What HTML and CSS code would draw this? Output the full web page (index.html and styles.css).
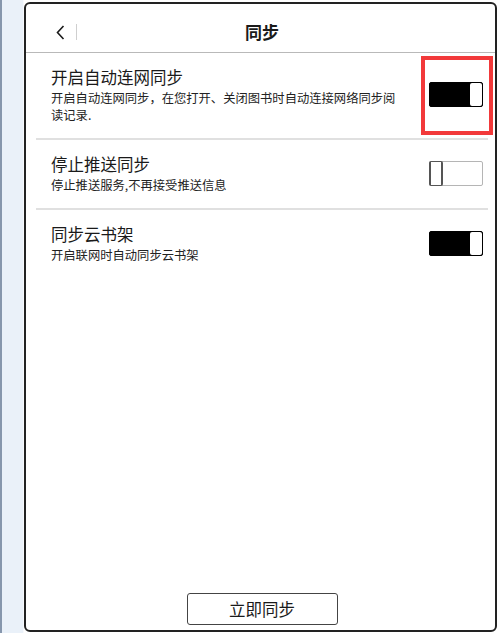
FILE: index.html
```html
<!DOCTYPE html>
<html lang="zh">
<head>
<meta charset="utf-8">
<title>同步</title>
<link rel="stylesheet" href="styles.css">
</head>
<body>
<div class="shell">
  <div class="rail"></div>
  <div class="frame">
    <header class="header">
      <div class="back">
        <svg class="chev" width="9" height="15" viewBox="0 0 9 15"><path d="M7.5 1 L1.5 7.5 L7.5 14" fill="none" stroke="#1a1a1a" stroke-width="1.6"/></svg>
        <span class="vsep"></span>
      </div>
      <h1 class="title">同步</h1>
      <div></div>
    </header>
    <div class="list">
      <div class="row">
        <div class="text">
          <div class="row-title">开启自动连网同步</div>
          <div class="row-sub">开启自动连网同步，在您打开、关闭图书时自动连接网络同步阅读记录.</div>
        </div>
        <div class="toggle on"><span class="knob"></span></div>
      </div>
      <div class="row">
        <div class="text">
          <div class="row-title">停止推送同步</div>
          <div class="row-sub">停止推送服务,不再接受推送信息</div>
        </div>
        <div class="toggle off"><span class="knob"></span></div>
      </div>
      <div class="row last">
        <div class="text">
          <div class="row-title">同步云书架</div>
          <div class="row-sub">开启联网时自动同步云书架</div>
        </div>
        <div class="toggle on"><span class="knob"></span></div>
      </div>
    </div>
    <div class="footer">
      <button class="sync-btn">立即同步</button>
    </div>
    <div class="highlight"></div>
  </div>
</div>
</body>
</html>
```
FILE: styles.css
```css
html, body {
  margin: 0;
  padding: 0;
  background: #ffffff;
  font-family: "Noto Sans CJK SC", "Noto Sans", sans-serif;
  color: #1a1a1a;
}
.shell {
  display: flex;
  width: 500px;
  height: 633px;
  overflow: hidden;
}
.rail {
  flex: 0 0 24px;
  box-sizing: border-box;
  border-left: 2px solid #8797ad;
  border-right: 1px solid #f7f9fc;
  background: #eaf1f9;
}
.frame {
  position: relative;
  flex: 0 0 473px;
  box-sizing: border-box;
  margin-top: 2px;
  height: 630px;
  border: 2px solid #222;
  border-radius: 6px;
  background: #fff;
  display: flex;
  flex-direction: column;
}
.header {
  box-sizing: border-box;
  height: 49px;
  padding-top: 8px;
  border-bottom: 1px solid #b9b9b9;
  display: grid;
  grid-template-columns: 1fr auto 1fr;
  align-items: center;
}
.back {
  display: flex;
  align-items: center;
  padding-left: 30px;
}
.chev { display: block; }
.vsep {
  width: 1px;
  height: 16px;
  background: #cfcfcf;
  margin-left: 11px;
}
.title {
  margin: 0 0 0 3px;
  font-size: 17px;
  font-weight: 700;
  line-height: 24px;
}
.list {
  margin: 0 7px 0 10px;
}
.row {
  display: flex;
  align-items: center;
  justify-content: space-between;
  padding: 12px 5px 14px 15px;
  border-bottom: 2px solid #e0e0e0;
}
.row.last { border-bottom: none; }
.text {
  flex: 0 0 352px;
}
.row-title {
  font-size: 16.5px;
  line-height: 24px;
  color: #1a1a1a;
}
.row-sub {
  margin-top: 1px;
  font-size: 12.3px;
  line-height: 17px;
  color: #222;
}
.toggle {
  position: relative;
  box-sizing: border-box;
  width: 54px;
  height: 25px;
  border-radius: 2px;
  display: flex;
}
.toggle.on {
  background: #000;
  border: 1px solid #000;
  justify-content: flex-end;
}
.toggle.on .knob {
  width: 12px;
  height: 100%;
  background: #fff;
  border-radius: 2px;
}
.toggle.off {
  background: #fff;
  border: 1px solid #b5b5b5;
  justify-content: flex-start;
}
.toggle.off .knob {
  box-sizing: border-box;
  width: 14px;
  height: 25px;
  margin: -1px 0 0 -1px;
  border: 1px solid #555;
  border-left-width: 2px;
  border-right-width: 2px;
  border-radius: 2px;
  background: #fff;
}
.footer {
  margin-top: auto;
  display: flex;
  justify-content: center;
  padding: 0 0 5px 3px;
}
.sync-btn {
  box-sizing: border-box;
  width: 151px;
  height: 32px;
  border: 1.5px solid #444;
  border-radius: 3px;
  background: #fff;
  font-family: "Noto Sans CJK SC", "Noto Sans", sans-serif;
  font-size: 16.5px;
  color: #1a1a1a;
  padding: 0;
}
.highlight {
  position: absolute;
  left: 395px;
  top: 52px;
  width: 72px;
  height: 79px;
  box-sizing: border-box;
  border: 4px solid #f2393a;
}
```
